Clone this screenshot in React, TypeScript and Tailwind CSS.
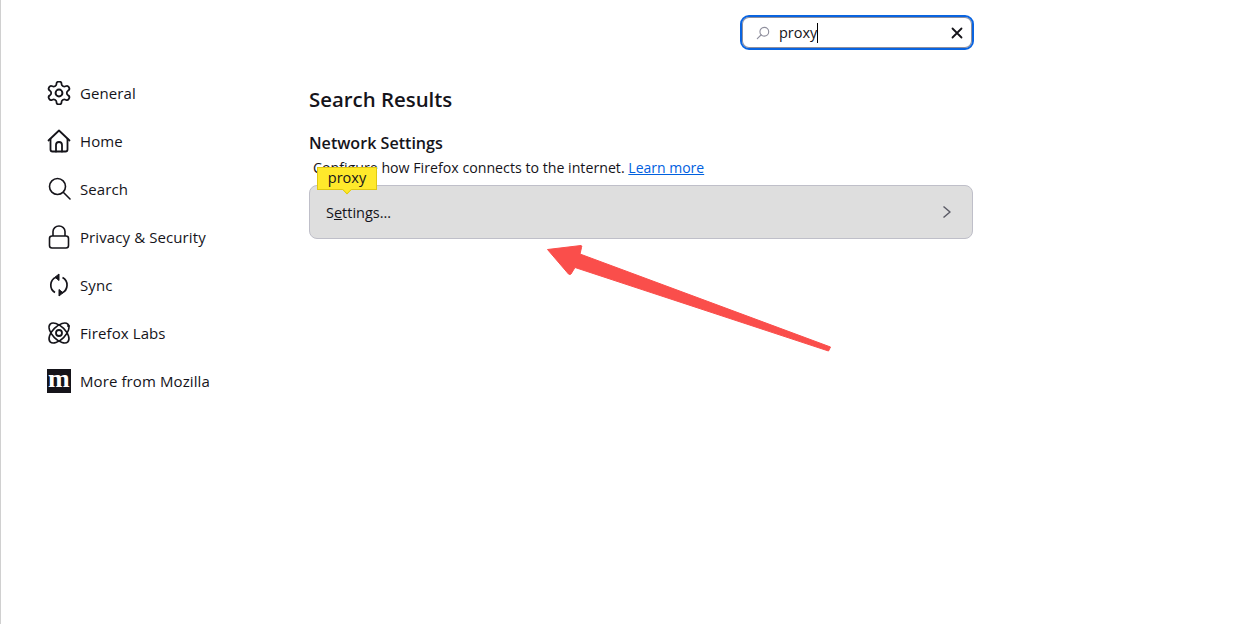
import React from "react";

const ic = "w-6 h-6 shrink-0 text-[#15141a]";

const Gear = () => (
  <svg viewBox="1.500 1.500 21 21" className={ic} fill="none" stroke="currentColor" strokeWidth="1.550" strokeLinejoin="round">
    <path d="M12.220 2h-.44a2 2 0 0 0-2 2v.18a2 2 0 0 1-1 1.730l-.43.25a2 2 0 0 1-2 0l-.15-.08a2 2 0 0 0-2.730.73l-.22.38a2 2 0 0 0 .73 2.730l.15.1a2 2 0 0 1 1 1.720v.51a2 2 0 0 1-1 1.740l-.15.09a2 2 0 0 0-.73 2.730l.22.38a2 2 0 0 0 2.730.73l.15-.08a2 2 0 0 1 2 0l.43.25a2 2 0 0 1 1 1.730V20a2 2 0 0 0 2 2h.44a2 2 0 0 0 2-2v-.18a2 2 0 0 1 1-1.730l.43-.25a2 2 0 0 1 2 0l.15.08a2 2 0 0 0 2.730-.73l.22-.39a2 2 0 0 0-.73-2.730l-.15-.08a2 2 0 0 1-1-1.740v-.5a2 2 0 0 1 1-1.740l.15-.09a2 2 0 0 0 .73-2.730l-.22-.38a2 2 0 0 0-2.730-.73l-.15.08a2 2 0 0 1-2 0l-.43-.25a2 2 0 0 1-1-1.730V4a2 2 0 0 0-2-2z" />
    <circle cx="12" cy="12" r="3" strokeWidth="1.700" />
  </svg>
);
const Home = () => (
  <svg viewBox="0 0 24 24" className={ic} fill="none" stroke="currentColor" strokeWidth="1.800" strokeLinejoin="round" strokeLinecap="round">
    <path d="M1.500 11.500 12 1.500l10.500 10" />
    <path d="M3.500 10v10.500a2 2 0 0 0 2 2h13a2 2 0 0 0 2-2V10" />
    <path d="M9 22.500V16a3 3 0 0 1 6 0v6.500" />
  </svg>
);
const Search = () => (
  <svg viewBox="0 0 24 24" className={ic} fill="none" stroke="currentColor" strokeWidth="1.600" strokeLinecap="round">
    <circle cx="10.500" cy="9.500" r="8" />
    <path d="m16.500 15.500 6.500 6.500" />
  </svg>
);
const Lock = () => (
  <svg viewBox="0 0 24 24" className={ic} fill="none" stroke="currentColor" strokeWidth="1.600" strokeLinejoin="round">
    <rect x="2.500" y="11" width="19" height="12" rx="2.500" />
    <path d="M6 11V6.500a6 5.500 0 0 1 12 0V11" />
  </svg>
);
const Sync = () => (
  <svg viewBox="0 0 24 24" className={ic} fill="none" stroke="currentColor" strokeWidth="1.700">
    <path d="M8 19.500A8.600 8.600 0 0 1 9 4.200" />
    <path d="M15.500 4.500a8.600 8.600 0 0 1-.5 15.400" />
    <path d="M12 1v6.500L8 4.200z" fill="currentColor" strokeWidth="1" strokeLinejoin="round" />
    <path d="M12 23v-6.500l4 3.300z" fill="currentColor" strokeWidth="1" strokeLinejoin="round" />
  </svg>
);
const Labs = () => (
  <svg viewBox="0 0 24 24" className={ic} fill="none" stroke="currentColor" strokeWidth="1.600">
    <ellipse cx="12" cy="12" rx="12.500" ry="6.500" transform="rotate(45 12 12)" />
    <ellipse cx="12" cy="12" rx="12.500" ry="6.500" transform="rotate(-45 12 12)" />
    <circle cx="12" cy="12" r="3" strokeWidth="1.800" />
    <circle cx="21.500" cy="5" r="1.300" fill="currentColor" stroke="none" />
  </svg>
);
const Moz = () => (
  <span className="w-6 h-6 shrink-0 bg-[#15141a] text-white flex items-center justify-center font-['Liberation_Serif',serif] font-bold text-[26px] leading-none pb-[4px]">
    m
  </span>
);

const items: [React.ReactNode, string][] = [
  [<Gear />, "General"],
  [<Home />, "Home"],
  [<Search />, "Search"],
  [<Lock />, "Privacy & Security"],
  [<Sync />, "Sync"],
  [<Labs />, "Firefox Labs"],
  [<Moz />, "More from Mozilla"],
];

export default function App() {
  return (
    <div className="relative h-[624px] w-[1255px] overflow-hidden bg-white border-l border-[#d0d0d0] font-['Open_Sans',sans-serif] text-[#15141a] flex">
      <nav className="w-[308px] shrink-0 pt-[69px] pl-[46px] flex flex-col">
        {items.map(([icon, label]) => (
          <div key={label} className="h-12 flex items-center gap-[9px] text-[15px] tracking-[0.1px]">
            {icon}
            <span className="mt-[1px]">{label}</span>
          </div>
        ))}
      </nav>
      <main className="w-[664px] shrink-0 flex flex-col">
        <div className="flex justify-end pt-[15px] -mr-px">
          <div className="w-[234px] h-[35px] rounded-[9px] border-2 border-[#0a64e0] shadow-[inset_0_0_0_1px_#8f8f9d] flex items-center pl-[14px] pr-[9px]">
            <svg viewBox="0 0 16 16" className="w-[14px] h-[14px] text-[#8f8f9d]" fill="none" stroke="currentColor" strokeWidth="1.300" strokeLinecap="round">
              <circle cx="9.500" cy="6.500" r="5" />
              <path d="M6 10 1.500 14.500" />
            </svg>
            <span className="ml-[9px] text-[14.5px] flex-1 flex items-center">
              proxy<span className="w-px h-[20px] bg-black" />
            </span>
            <svg viewBox="0 0 12 12" className="w-3 h-3" fill="none" stroke="#15141a" strokeWidth="1.800" strokeLinecap="round">
              <path d="M1.500 1.500l9 9M10.500 1.500l-9 9" />
            </svg>
          </div>
        </div>
        <h1 className="mt-[34px] text-[20.400px] leading-[30px] font-semibold">Search Results</h1>
        <h2 className="mt-[17px] text-[16.100px] leading-[24px] font-semibold">Network Settings</h2>
        <p className="mt-[1px] ml-1 text-[14.200px] leading-[24px]">
          Configure how Firefox connects to the internet.{" "}
          <a className="text-[#0060df] underline text-[14px]">Learn more</a>
        </p>
        <div className="relative mt-[5px] h-[54px] rounded-lg bg-[#dedede] border border-[#bfbfc9] flex items-center justify-between pl-4 pr-[19px] text-[14.5px]">
          <span className="mt-[1px]">
            S<span className="underline">e</span>ttings…
          </span>
          <svg viewBox="0 0 12 16" className="w-3 h-4" fill="none" stroke="#5b5b66" strokeWidth="1.500" strokeLinejoin="round">
            <path d="M2.500 2.500 9 8l-6.500 5.500" />
          </svg>
          <div className="absolute left-[7px] top-[-19px] w-[60px] h-[23px] bg-[#ffe92b] border border-[#e0c810] flex items-center justify-center text-[14.5px] leading-none">
            proxy
            <span className="absolute left-[25px] top-[17px] w-2 h-2 rotate-45 bg-[#ffe92b] border-r border-b border-[#e0c810] [clip-path:polygon(100%_0,100%_100%,0_100%)]" />
          </div>
        </div>
      </main>
      <svg className="absolute left-[-1px] top-0 pointer-events-none" width="1255" height="624" viewBox="0 0 1255 624">
        <path
          d="M547.500 249.500 581 245.500q1.500.5.500 2L580 254 830.500 347 828.500 351 575 267.500 571 274q-1.500 1-2.500 0z"
          fill="#fa4e4b"
          stroke="#fa4e4b"
          strokeWidth="1"
          strokeLinejoin="round"
        />
      </svg>
    </div>
  );
}
